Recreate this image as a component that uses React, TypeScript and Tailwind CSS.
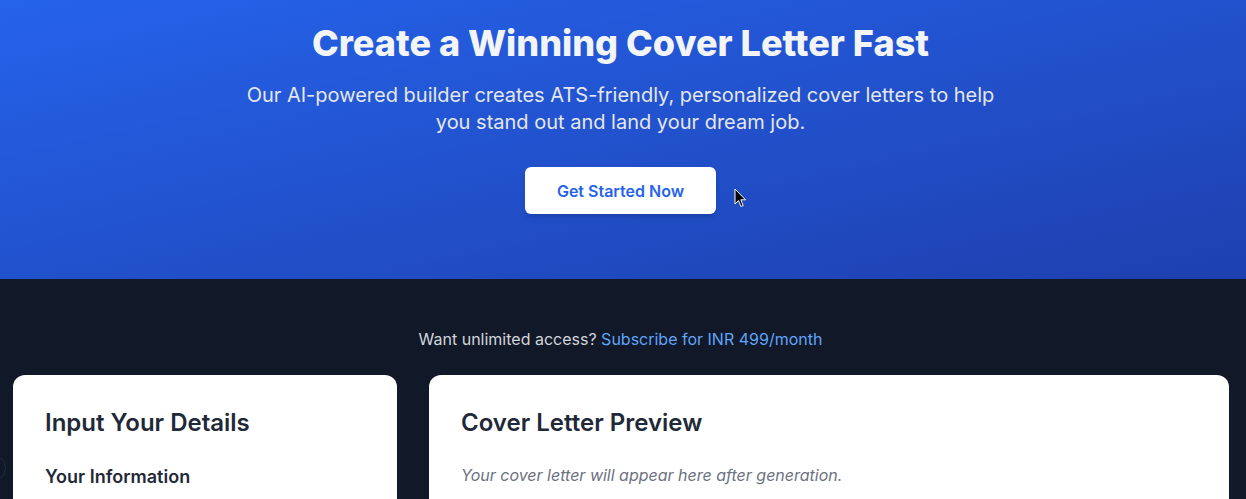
import React from "react";

const Cursor = () => (
  <svg
    className="absolute left-[734px] top-[188px]"
    width="13"
    height="20"
    viewBox="0 0 13 20"
  >
    <path d="M1 1 L1 16 L4.5 12.5 L7 18.5 L9.2 17.6 L6.8 11.8 L11.5 11.8 Z" fill="#000" stroke="#fff" strokeWidth="1" strokeLinejoin="round" />
  </svg>
);

export default function App() {
  return (
    <div className="relative min-h-screen bg-[#111827] font-['Inter',sans-serif] overflow-hidden">
      <div className="w-[1241px]">
        {/* Hero */}
        <section className="h-[279px] bg-gradient-to-br from-[#2563eb] to-[#1e40af] pt-[23px] text-center mr-[-5px] pr-[5px]">
          <h1 className="text-4xl font-extrabold leading-10 text-[#f3f4f6]">
            Create a Winning Cover Letter Fast
          </h1>
          <p className="mx-auto mt-[19px] max-w-3xl text-xl leading-[27px] text-[#e5e7eb]">
            Our AI-powered builder creates ATS-friendly, personalized cover letters to help you stand out and land your dream job.
          </p>
          <button className="mt-[31px] h-[47px] w-[191px] rounded-md bg-white text-base font-semibold text-[#2563eb] shadow-md">
            Get Started Now
          </button>
        </section>

        {/* Main */}
        <section className="pt-12">
          <p className="text-center text-base leading-6 text-[#d1d5db]">
            Want unlimited access?{" "}
            <a className="text-[#60a5fa]">Subscribe for INR 499/month</a>
          </p>
          <div className="mt-6 flex gap-8 pl-[13px] pr-[12px]">
            <div className="w-[384px] shrink-0 rounded-xl bg-white p-8 h-[200px]">
              <h2 className="text-2xl font-semibold leading-8 text-[#1f2937]">Input Your Details</h2>
              <h3 className="mt-6 text-lg font-semibold leading-7 text-[#1f2937]">Your Information</h3>
            </div>
            <div className="flex-1 rounded-xl bg-white p-8 h-[200px]">
              <h2 className="text-2xl font-semibold leading-8 text-[#1f2937]">Cover Letter Preview</h2>
              <p className="mt-6 text-base italic leading-6 text-[#6b7280]">
                Your cover letter will appear here after generation.
              </p>
            </div>
          </div>
        </section>
      </div>
      <Cursor />

      <div className="absolute left-[-22px] top-[454px] h-7 w-7 rounded-full border border-[#1f2a44]" />
    </div>
  );
}
